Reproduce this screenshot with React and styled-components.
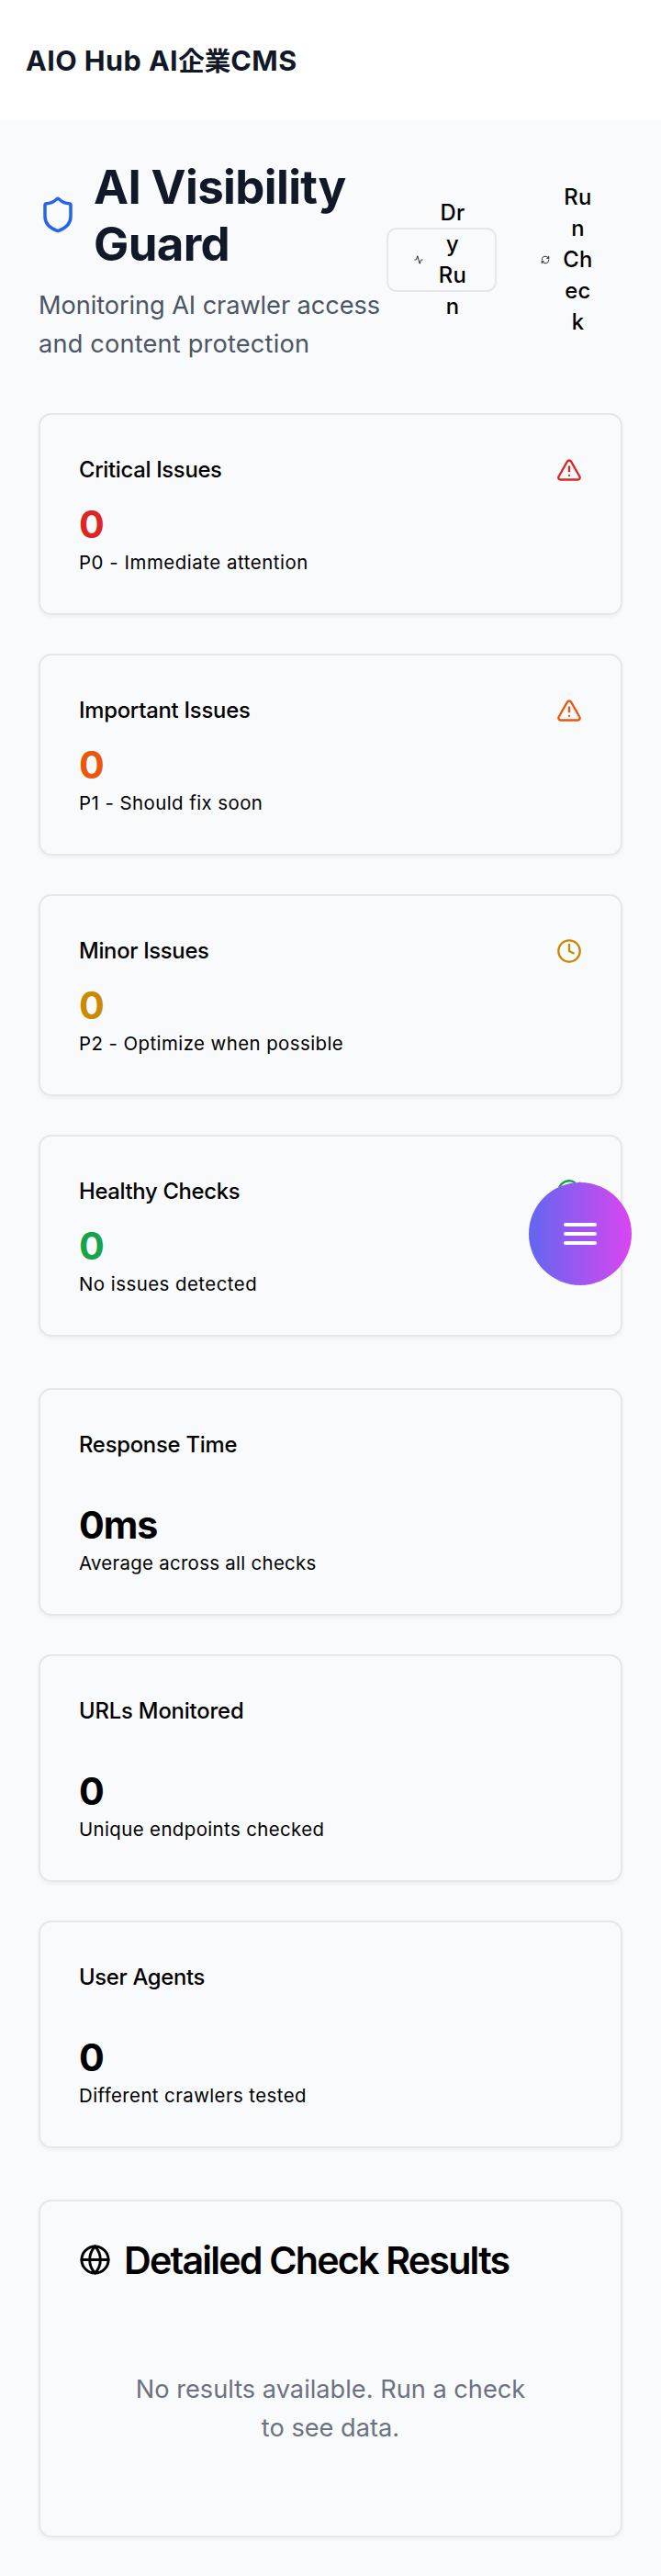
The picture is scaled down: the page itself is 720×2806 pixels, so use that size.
import React from 'react';
import styled, { createGlobalStyle } from 'styled-components';
import { Activity, CircleCheckBig, Clock, Globe, RefreshCw, Shield, TriangleAlert } from 'lucide-react';

const GlobalStyle = createGlobalStyle`
  *, *::before, *::after { box-sizing: border-box; }
  body {
    margin: 0;
    background: #f9fafc;
    color: #000;
    font-family: Inter, "Noto Sans CJK JP", sans-serif;
    -webkit-font-smoothing: antialiased;
  }
  h1, h2, h3, p { margin: 0; }
  svg { display: block; flex: none; }
`;

const Page = styled.div`
  position: relative;
  min-height: 2806px;
`;

const TopBar = styled.header`
  display: flex;
  align-items: center;
  height: 130px;
  padding: 2px 28px 0;
  background: #fff;
`;

const Brand = styled.div`
  font-size: 30.5px;
  line-height: 49px;
  font-weight: 700;
  letter-spacing: 0.45px;
  color: #111827;
`;

const BrandKanji = styled.span`
  font-size: 28.6px;
  letter-spacing: 0;
`;

const Main = styled.main`
  padding: 41px 42px 42px;
`;

const Hero = styled.section`
  display: flex;
  align-items: center;
  justify-content: space-between;
  height: 224px;
  margin-bottom: 55px;
`;

const Intro = styled.div`
  flex: none;
  width: 379px;
`;

const TitleRow = styled.div`
  display: flex;
  align-items: center;
  gap: 18px;
  color: #2563eb;
`;

const PageTitle = styled.h1`
  padding-top: 2px;
  font-size: 51px;
  line-height: 62.5px;
  font-weight: 700;
  letter-spacing: -0.64px;
  color: #111827;
`;

const Lead = styled.p`
  margin-top: 14px;
  font-size: 27.2px;
  line-height: 42px;
  white-space: nowrap;
  color: #4b5563;
`;

const LeadLine = styled.span`
  display: block;
  letter-spacing: ${(p) => p.$spacing}px;
`;

const Actions = styled.div`
  display: flex;
  gap: 17px;
`;

const ActionButton = styled.button`
  display: flex;
  align-items: center;
  justify-content: center;
  gap: ${(p) => (p.$outlined ? 14 : 13)}px;
  width: 120px;
  height: 70px;
  padding: 0;
  border: 2px solid ${(p) => (p.$outlined ? '#e5e7ea' : 'transparent')};
  border-radius: 11px;
  background: transparent;
  color: #000;
  font: inherit;
`;

const ActionLabel = styled.span`
  width: 36px;
  font-size: 23.8px;
  line-height: 34px;
  font-weight: 500;
  letter-spacing: 0.4px;
  text-align: center;
  overflow-wrap: anywhere;
`;

const CardStack = styled.section`
  display: flex;
  flex-direction: column;
  gap: 42px;
  margin-bottom: 56px;
`;

const Card = styled.article`
  height: ${(p) => p.$height}px;
  padding: 43px 42px 41px;
  border: 2px solid #e5e7ea;
  border-radius: 14px;
  box-shadow: 0 2px 4px rgba(0, 0, 0, 0.05);
`;

const CardHeader = styled.div`
  display: flex;
  align-items: center;
  justify-content: space-between;
  height: 34px;
  margin-bottom: ${(p) => p.$gap}px;
  color: ${(p) => p.$color};
`;

const CardTitle = styled.h3`
  font-size: 23.8px;
  line-height: 34px;
  font-weight: 500;
  letter-spacing: ${(p) => p.$spacing}px;
  color: #000;
`;

const Value = styled.div`
  font-size: 41.2px;
  line-height: 56px;
  font-weight: 700;
  letter-spacing: -1px;
  color: ${(p) => p.$color};
`;

const Note = styled.p`
  font-size: 20.4px;
  line-height: 28px;
  letter-spacing: ${(p) => p.$spacing}px;
`;

const ResultsHeader = styled.div`
  display: flex;
  align-items: center;
  gap: 14px;
  height: 41px;
  margin-bottom: 42px;
`;

const ResultsTitle = styled.h2`
  font-size: 41.2px;
  line-height: 42px;
  font-weight: 600;
  letter-spacing: -1.8px;
  white-space: nowrap;
`;

const EmptyState = styled.p`
  padding: 58px 56px 54px;
  font-size: 27.2px;
  line-height: 42px;
  text-align: center;
  color: #6b7280;
`;

const MenuButton = styled.button`
  position: absolute;
  top: 1288px;
  right: 32px;
  display: flex;
  flex-direction: column;
  align-items: center;
  justify-content: center;
  gap: 6px;
  width: 112px;
  height: 112px;
  padding: 0;
  border: 0;
  border-radius: 50%;
  background: linear-gradient(90deg, #6366f1, #d946ef);
`;

const MenuBar = styled.span`
  width: 36px;
  height: 4px;
  border-radius: 2px;
  background: #fff;
`;

const ISSUES = [
  { title: 'Critical Issues', titleSpacing: -0.3, value: '0', note: 'P0 - Immediate attention', noteSpacing: 0.55, color: '#dc2626', Icon: TriangleAlert },
  { title: 'Important Issues', titleSpacing: -0.22, value: '0', note: 'P1 - Should fix soon', noteSpacing: 0.45, color: '#ea580c', Icon: TriangleAlert },
  { title: 'Minor Issues', titleSpacing: -0.3, value: '0', note: 'P2 - Optimize when possible', noteSpacing: 0.44, color: '#ca8a04', Icon: Clock },
  { title: 'Healthy Checks', titleSpacing: -0.31, value: '0', note: 'No issues detected', noteSpacing: 0.48, color: '#16a34a', Icon: CircleCheckBig },
];

const METRICS = [
  { title: 'Response Time', titleSpacing: -0.22, value: '0ms', note: 'Average across all checks', noteSpacing: 0.3 },
  { title: 'URLs Monitored', titleSpacing: -0.16, value: '0', note: 'Unique endpoints checked', noteSpacing: 0.4 },
  { title: 'User Agents', titleSpacing: -0.3, value: '0', note: 'Different crawlers tested', noteSpacing: 0.42 },
];

export default function App() {
  return (
    <Page>
      <GlobalStyle />
      <TopBar>
        <Brand>AIO Hub AI<BrandKanji>企業</BrandKanji>CMS</Brand>
      </TopBar>
      <Main>
        <Hero>
          <Intro>
            <TitleRow>
              <Shield size={42} />
              <PageTitle>AI Visibility Guard</PageTitle>
            </TitleRow>
            <Lead>
              <LeadLine $spacing={-0.08}>Monitoring AI crawler access </LeadLine>
              <LeadLine $spacing={0.18}>and content protection</LeadLine>
            </Lead>
          </Intro>
          <Actions>
            <ActionButton $outlined>
              <Activity size={10} />
              <ActionLabel>Dry Run</ActionLabel>
            </ActionButton>
            <ActionButton>
              <RefreshCw size={10} />
              <ActionLabel>Run Check</ActionLabel>
            </ActionButton>
          </Actions>
        </Hero>

        <CardStack>
          {ISSUES.map(({ title, titleSpacing, value, note, noteSpacing, color, Icon }) => (
            <Card key={title} $height={220}>
              <CardHeader $gap={14} $color={color}>
                <CardTitle $spacing={titleSpacing}>{title}</CardTitle>
                <Icon size={28} />
              </CardHeader>
              <Value $color={color}>{value}</Value>
              <Note $spacing={noteSpacing}>{note}</Note>
            </Card>
          ))}
        </CardStack>

        <CardStack>
          {METRICS.map(({ title, titleSpacing, value, note, noteSpacing }) => (
            <Card key={title} $height={248}>
              <CardHeader $gap={42} $color="#000">
                <CardTitle $spacing={titleSpacing}>{title}</CardTitle>
              </CardHeader>
              <Value $color="#000">{value}</Value>
              <Note $spacing={noteSpacing}>{note}</Note>
            </Card>
          ))}
        </CardStack>

        <Card $height={368}>
          <ResultsHeader>
            <Globe size={35} />
            <ResultsTitle>Detailed Check Results</ResultsTitle>
          </ResultsHeader>
          <EmptyState>No results available. Run a check to see data.</EmptyState>
        </Card>
      </Main>
      <MenuButton aria-label="Menu">
        <MenuBar />
        <MenuBar />
        <MenuBar />
      </MenuButton>
    </Page>
  );
}
